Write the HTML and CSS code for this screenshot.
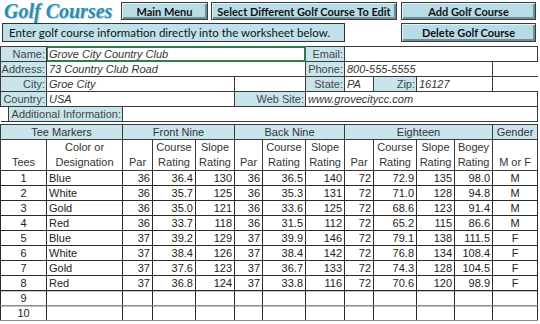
FILE: index.html
```html
<!DOCTYPE html>
<html lang="en">
<head>
    <meta charset="UTF-8">
    <meta name="viewport" content="width=device-width, initial-scale=1.0">
    <title>Golf Courses</title>
    <link rel="stylesheet" href="styles.css">
</head>
<body>
    <div class="sheet">
        <div class="top-row">
            <h1 class="title">Golf Courses</h1>
            <button class="btn btn-menu">Main Menu</button>
            <button class="btn btn-select">Select Different Golf Course To Edit</button>
            <button class="btn btn-add">Add Golf Course</button>
        </div>
        <div class="second-row">
            <div class="hint">Enter golf course information directly into the worksheet below.</div>
            <button class="btn btn-delete">Delete Golf Course</button>
        </div>

        <table class="grid form">
            <colgroup>
                <col class="c1"><col class="c2"><col class="c3"><col class="c4"><col class="c5">
                <col class="c6"><col class="c7"><col class="c8"><col class="c9"><col class="c10">
                <col class="c11"><col class="c12"><col class="c13">
            </colgroup>
            <tr>
                <td class="lbl">Name:</td>
                <td class="val selected" colspan="6">Grove City Country Club</td>
                <td class="lbl">Email:</td>
                <td class="val" colspan="5"></td>
            </tr>
            <tr>
                <td class="lbl">Address:</td>
                <td class="val" colspan="6">73 Country Club Road</td>
                <td class="lbl">Phone:</td>
                <td class="val" colspan="4">800-555-5555</td>
                <td class="blank"></td>
            </tr>
            <tr>
                <td class="lbl">City:</td>
                <td class="val" colspan="4">Groe City</td>
                <td class="val" colspan="2"></td>
                <td class="lbl">State:</td>
                <td class="val">PA</td>
                <td class="lbl">Zip:</td>
                <td class="val" colspan="2">16127</td>
                <td class="blank"></td>
            </tr>
            <tr>
                <td class="lbl">Country:</td>
                <td class="val" colspan="4">USA</td>
                <td class="lbl" colspan="2">Web Site:</td>
                <td class="val" colspan="6">www.grovecitycc.com</td>
            </tr>
            <tr class="extra">
                <td class="lbl-wrap" colspan="2"><div class="lbl-inner">Additional Information:</div></td>
                <td class="val" colspan="11"></td>
            </tr>
        </table>

        <table class="grid tees">
            <colgroup>
                <col class="c1"><col class="c2"><col class="c3"><col class="c4"><col class="c5">
                <col class="c6"><col class="c7"><col class="c8"><col class="c9"><col class="c10">
                <col class="c11"><col class="c12"><col class="c13">
            </colgroup>
            <thead>
                <tr class="group">
                    <th colspan="2">Tee Markers</th>
                    <th colspan="3">Front Nine</th>
                    <th colspan="3">Back Nine</th>
                    <th colspan="4">Eighteen</th>
                    <th>Gender</th>
                </tr>
                <tr class="heads">
                    <th>Tees</th>
                    <th>Color or<br>Designation</th>
                    <th>Par</th>
                    <th>Course<br>Rating</th>
                    <th>Slope<br>Rating</th>
                    <th>Par</th>
                    <th>Course<br>Rating</th>
                    <th>Slope<br>Rating</th>
                    <th>Par</th>
                    <th>Course<br>Rating</th>
                    <th>Slope<br>Rating</th>
                    <th>Bogey<br>Rating</th>
                    <th>M or F</th>
                </tr>
            </thead>
            <tbody id="teeRows"></tbody>
        </table>
    </div>

    <script>
        const tees = [
            [1, 'Blue', 36, '36.4', 130, 36, '36.5', 140, 72, '72.9', 135, '98.0', 'M'],
            [2, 'White', 36, '35.7', 125, 36, '35.3', 131, 72, '71.0', 128, '94.8', 'M'],
            [3, 'Gold', 36, '35.0', 121, 36, '33.6', 125, 72, '68.6', 123, '91.4', 'M'],
            [4, 'Red', 36, '33.7', 118, 36, '31.5', 112, 72, '65.2', 115, '86.6', 'M'],
            [5, 'Blue', 37, '39.2', 129, 37, '39.9', 146, 72, '79.1', 138, '111.5', 'F'],
            [6, 'White', 37, '38.4', 126, 37, '38.4', 142, 72, '76.8', 134, '108.4', 'F'],
            [7, 'Gold', 37, '37.6', 123, 37, '36.7', 133, 72, '74.3', 128, '104.5', 'F'],
            [8, 'Red', 37, '36.8', 124, 37, '33.8', 116, 72, '70.6', 120, '98.9', 'F'],
            [9, '', '', '', '', '', '', '', '', '', '', '', ''],
            [10, '', '', '', '', '', '', '', '', '', '', '', '']
        ];

        const body = document.getElementById('teeRows');
        tees.forEach(row => {
            const tr = document.createElement('tr');
            if (row[1] === '') tr.className = 'empty';
            row.forEach((value, i) => {
                const td = document.createElement('td');
                if (i === 0 || i === 12) td.className = 'mid';
                else if (i === 1) td.className = 'left';
                td.textContent = value;
                tr.appendChild(td);
            });
            body.appendChild(tr);
        });
    </script>
</body>
</html>
```

FILE: styles.css
```css
body {
    margin: 0;
    background-color: #fff;
    font-family: 'Liberation Sans', Arial, sans-serif;
    color: #222;
}
.sheet {
    width: 540px;
    height: 324px;
    overflow: hidden;
}
.top-row {
    display: flex;
    align-items: center;
    height: 18px;
    padding-top: 2px;
}
.title {
    width: 117px;
    margin: 0 0 0 4px;
    font-family: 'Liberation Serif', 'Times New Roman', serif;
    font-size: 20px;
    font-style: italic;
    font-weight: bold;
    color: #2b8db3;
    text-shadow: 1px 1px 1px #a9cfdb;
    line-height: 18px;
    white-space: nowrap;
}
.btn {
    height: 18px;
    padding: 0;
    background-color: #b7dce6;
    border: 1px solid #3d3d3d;
    box-shadow: inset 1px 1px 0 #e4f3f7, inset -2px -2px 0 #6f8f98;
    font-family: Lato, 'Liberation Sans', sans-serif;
    font-size: 11px;
    font-weight: bold;
    color: #111;
}
.btn-menu {
    width: 87px;
}
.btn-select {
    width: 186px;
    margin-left: 3px;
}
.btn-add {
    width: 135px;
    margin-left: 4px;
}
.second-row {
    display: flex;
    align-items: center;
    height: 19px;
    margin-top: 3px;
}
.hint {
    width: 335px;
    height: 17px;
    margin-left: 2px;
    padding-left: 6px;
    background-color: #bee1eb;
    border: 1px solid #333;
    font-family: Lato, 'Liberation Sans', sans-serif;
    font-size: 11.5px;
    line-height: 17px;
    white-space: nowrap;
    color: #111;
}
.btn-delete {
    width: 135px;
    height: 19px;
    margin-left: 56px;
}
.grid {
    border-collapse: collapse;
    table-layout: fixed;
    width: 537px;
    font-size: 11px;
}
.grid td,
.grid th {
    height: 14px;
    padding: 0 2px;
    line-height: 14px;
    white-space: nowrap;
    overflow: hidden;
}
.c1 { width: 46px; }
.c2 { width: 76px; }
.c3 { width: 30px; }
.c4 { width: 43px; }
.c5 { width: 39px; }
.c6 { width: 28px; }
.c7 { width: 43px; }
.c8 { width: 39px; }
.c9 { width: 29px; }
.c10 { width: 43px; }
.c11 { width: 38px; }
.c12 { width: 38px; }
.c13 { width: 45px; }
.form {
    margin-top: 4px;
}
.form .lbl {
    text-align: right;
    background-color: #c8e4ed;
    border: 1px solid #3a3a3a;
    color: #444;
    padding: 0 1px 0 0;
}
.form .val {
    border: 1px solid #3a3a3a;
    font-style: italic;
    color: #333;
}
.form .selected {
    border-color: #2f7d4f;
    box-shadow: inset 0 0 0 1px #2f7d4f;
}
.form .blank {
    border: none;
    border-top: 1px solid #3a3a3a;
}
.form .lbl-wrap {
    padding: 0 0 0 7px;
    border-bottom: 1px solid #3a3a3a;
}
.lbl-inner {
    height: 14px;
    padding-right: 1px;
    text-align: right;
    background-color: #c8e4ed;
    border-left: 1px solid #3a3a3a;
    color: #444;
}
.extra td {
    border-bottom: 1px solid #3a3a3a;
}
.tees {
    margin-top: 2px;
}
.tees th {
    font-weight: normal;
    color: #333;
    border: 1px solid #3a3a3a;
}
.group th {
    background-color: #c8e4ed;
}
.heads th {
    height: 29px;
    line-height: 15px;
    vertical-align: bottom;
}
.tees td {
    text-align: right;
    border: 1px solid #2a2a2a;
    color: #222;
}
.tees td.mid {
    text-align: center;
}
.tees td.left {
    text-align: left;
}
.tees tr.empty td {
    border-top-color: #8a8a8a;
    border-bottom-color: #8a8a8a;
    box-shadow: inset 0 1px 0 #c4c4c4;
}
```
